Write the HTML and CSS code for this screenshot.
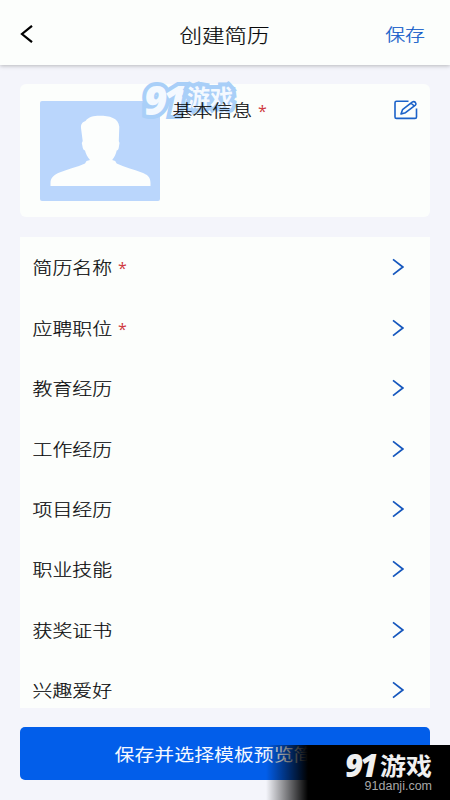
FILE: index.html
```html
<!DOCTYPE html>
<html lang="zh-CN">
<head>
<meta charset="utf-8">
<title>创建简历</title>
<link rel="stylesheet" href="styles.css">
</head>
<body>
<div class="screen">
  <header class="bar">
    <svg class="back" width="14" height="18" viewBox="0 0 14 18"><path d="M12 .8 2 9l10 8.200"/></svg>
    <h1 class="title"><span class="zh">创建简历</span></h1>
    <span class="save"><span class="zh">保存</span></span>
  </header>

  <main class="content">
    <section class="profile">
      <svg class="photo" width="120" height="100" viewBox="0 0 120 100">
        <rect width="120" height="100" rx="2" fill="#bad6fc"/>
        <path fill="#fcfefd" d="M10.500 85v-3c0-5.500 4-8.500 9-10.500 8-3.200 18-5.500 25.500-9l1.500-2.500 3.500-1c-2.500-3-4.200-6-5-9.500-1.500-.2-2.200-1.800-2.500-4l-.7-3.500.9-2-1.700-13c-.3-4 1.500-6 4.500-7 3-4 8-5.200 14-5.200 10 0 19 2 19.800 11l-.5 14.200.7 2-.8 5c-.3 1.500-1 2.300-2 2.500-.7 3.500-2.200 6.500-4.500 9.500l3 1 1.500 2.500c7.500 3.500 17 6 25 9 5.500 2 8.800 4.500 8.800 10.500v3z"/>
      </svg>
      <div class="heading"><span class="zh">基本信息</span><i class="star">*</i></div>
      <svg class="edit" width="24" height="20" viewBox="0 0 24 20"><path d="M14.500 1.200H2.500Q1 1.200 1 2.700v14.200q0 1.500 1.500 1.500h18.500q1.500 0 1.500-1.500V8.500"/><path d="m7 14 1.500-4.300 10-7.800q1.600-.8 2.900.5 1.200 1.400 0 2.700L11.500 12.700zM17 3l3.200 3"/></svg>
      <div class="mark"><span class="mark-num">91</span><span class="mark-name">游戏</span></div>
    </section>

    <section class="list">
      <div class="row"><span class="zh">简历名称</span><i class="star">*</i><svg class="arrow" viewBox="0 0 12 18"><path d="m1 1.300 9.800 7.700L1 16.700"/></svg></div>
      <div class="row"><span class="zh">应聘职位</span><i class="star">*</i><svg class="arrow" viewBox="0 0 12 18"><path d="m1 1.300 9.800 7.700L1 16.700"/></svg></div>
      <div class="row"><span class="zh">教育经历</span><svg class="arrow" viewBox="0 0 12 18"><path d="m1 1.300 9.800 7.700L1 16.700"/></svg></div>
      <div class="row"><span class="zh">工作经历</span><svg class="arrow" viewBox="0 0 12 18"><path d="m1 1.300 9.800 7.700L1 16.700"/></svg></div>
      <div class="row"><span class="zh">项目经历</span><svg class="arrow" viewBox="0 0 12 18"><path d="m1 1.300 9.800 7.700L1 16.700"/></svg></div>
      <div class="row"><span class="zh">职业技能</span><svg class="arrow" viewBox="0 0 12 18"><path d="m1 1.300 9.800 7.700L1 16.700"/></svg></div>
      <div class="row"><span class="zh">获奖证书</span><svg class="arrow" viewBox="0 0 12 18"><path d="m1 1.300 9.800 7.700L1 16.700"/></svg></div>
      <div class="row"><span class="zh">兴趣爱好</span><svg class="arrow" viewBox="0 0 12 18"><path d="m1 1.300 9.800 7.700L1 16.700"/></svg></div>
    </section>

    <div class="submit"><span class="zh">保存并选择模板预览简历</span></div>
  </main>

  <div class="badge">
    <div class="badge-logo"><span class="badge-num">91</span><span class="badge-name">游戏</span></div>
    <div class="badge-url">91danji.com</div>
  </div>
</div>
</body>
</html>
```

FILE: styles.css
```css
* { box-sizing: border-box; }
body { margin: 0; }
svg { display: block; fill: none; flex: none; }
.screen {
  position: relative;
  width: 450px;
  height: 800px;
  overflow: hidden;
  background: #f4f5fb;
  color: #08090a;
  font-family: "Noto Sans CJK SC", sans-serif;
  font-size: 19.9px;
  font-weight: 300;
}
.zh { display: inline-block; line-height: 24px; transform: scaleY(.88); white-space: nowrap; -webkit-text-stroke: .25px; }
.bar {
  display: grid;
  grid-template-columns: 102px 1fr 98px;
  align-items: center;
  height: 65px;
  padding: 3px 25px 0 20px;
  background: #fcfefc;
  box-shadow: 0 1px 4px rgba(0, 0, 0, .25);
}
.back { stroke: #000; stroke-width: 2.200; }
.title { margin: 0; font-size: 22.500px; font-weight: 300; text-align: center; }
.save { margin-top: -1px; color: #0b57c8; text-align: right; }
.content { padding: 19px 20px 0; }
.profile {
  position: relative;
  display: flex;
  align-items: flex-start;
  height: 133px;
  padding: 16px 12px 0 19.500px;
  border-radius: 6px;
  background: #fcfefc;
}
.photo { margin-top: .5px; }
.heading { display: flex; position: relative; z-index: 2; margin: -2px 0 0 13px; }
.star { margin-left: 6px; color: #cf3a40; font: 400 16px/24px "Open Sans", sans-serif; position: relative; top: 1px; }
.edit { margin-left: auto; stroke: #1b62c9; stroke-width: 1.600; stroke-linejoin: round; }
.mark {
  position: absolute;
  left: 124px;
  top: -5px;
  display: flex;
  align-items: center;
  height: 42px;
  color: #f4f9ff;
  -webkit-text-stroke: 8px #a9cff8;
  paint-order: stroke fill;
  stroke-linejoin: round;
}
.mark-num { width: 43px; font: italic 900 40px/40px "Open Sans", sans-serif; letter-spacing: -4px; }
.mark-name { margin-top: -8px; font-size: 23px; font-weight: 700; line-height: 26px; }
.list { height: 471px; margin-top: 20px; overflow: hidden; background: #fcfefc; }
.row { display: flex; align-items: center; height: 60.450px; padding: 0 26px 0 12.500px; }
.row .star { top: 1px; }
.arrow { width: 12px; height: 18px; margin-left: auto; stroke: #1557bd; stroke-width: 1.700; }
.submit {
  display: flex;
  align-items: center;
  justify-content: center;
  height: 53px;
  margin-top: 19px;
  padding-right: 2px;
  border-radius: 5px;
  background: #025eea;
  color: #f4f8ff;
  font-weight: 400;
}
.submit .zh { -webkit-text-stroke: 0; }
.badge {
  position: absolute;
  right: 0;
  bottom: 0;
  width: 184px;
  height: 55px;
  padding: 5px 18px 0 0;
  background: linear-gradient(90deg, transparent, #000 42px);
  color: #f0f0f0;
}
.badge-logo { display: flex; justify-content: flex-end; align-items: center; height: 29px; }
.badge-num { width: 35px; font: italic 900 31px/28px "Open Sans", sans-serif; letter-spacing: -3px; }
.badge-name { font-size: 26px; font-weight: 700; line-height: 28px; transform: scaleY(.92); }
.badge-url { margin-top: 1px; color: #a8a8a8; font: 12.500px/13px "Liberation Sans", sans-serif; text-align: right; }
```
